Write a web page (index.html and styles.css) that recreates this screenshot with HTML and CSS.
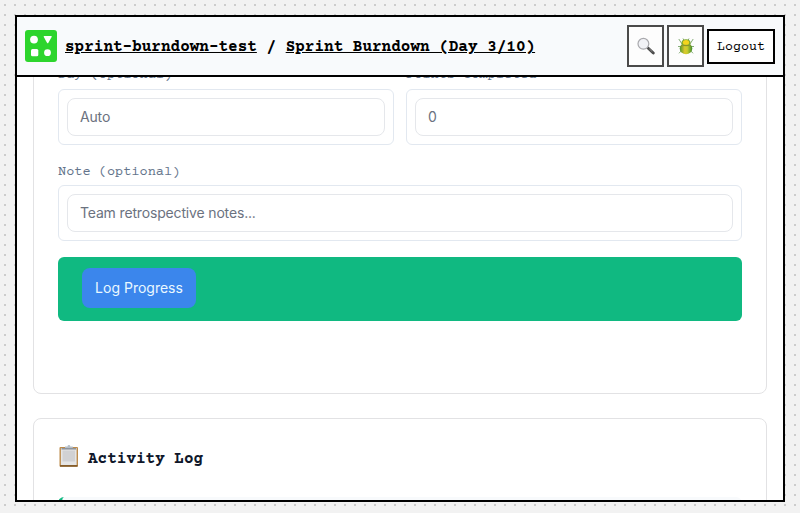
FILE: index.html
```html
<!DOCTYPE html>
<html lang="en">
<head>
<meta charset="utf-8">
<title>Sprint Burndown</title>
<link rel="stylesheet" href="styles.css">
</head>
<body>
<div class="window">
  <header class="bar">
    <svg class="logo" width="32" height="32" viewBox="0 0 32 32">
      <rect width="32" height="32" rx="3" fill="#2dd52d"/>
      <g fill="#fff">
        <circle cx="9" cy="9.600" r="3.900"/>
        <path d="M19.300 6h6.800q1 0 .5 1l-3.200 5.700q-.7 1-1.400 0l-3.200-5.700q-.5-1 .5-1z"/>
        <rect x="6" y="19" width="7.300" height="7.300" rx="1.500"/>
        <circle cx="22.500" cy="22.700" r="3.400"/>
      </g>
    </svg>
    <div class="crumbs"><a>sprint-burndown-test</a> / <a>Sprint Burndown (Day 3/10)</a></div>
    <div class="actions">
      <button class="tool" aria-label="Search">
        <svg width="18" height="18" viewBox="0 0 18 18">
          <path d="M11 11l5.300 5" stroke="#4b4b4b" stroke-width="2.800" stroke-linecap="round"/>
          <path d="M12.300 11.800l3 2.900" stroke="#898989" stroke-width="1"/>
          <circle cx="6.400" cy="6.800" r="5.400" fill="#f1f2f6" stroke="#a9a9ad" stroke-width="1.200"/>
        </svg>
      </button>
      <button class="tool" aria-label="Report bug">
        <svg width="18" height="18" viewBox="0 0 18 18">
          <defs><linearGradient id="shell"><stop stop-color="#4f962d"/><stop offset=".4" stop-color="#dcc82d"/><stop offset=".6" stop-color="#c8cc2c"/><stop offset="1" stop-color="#3f8c2e"/></linearGradient></defs>
          <path d="M5 7L1.800 2M13 7l3.200-5M4 9.500H1M14 9.500h3M5 13l-3 3.300M13 13l3 3.300M7 3.500L6 1.500M11 3.500l1-2" fill="none" stroke="#86ae78" stroke-width="1"/>
          <ellipse cx="9" cy="11.500" rx="6.300" ry="5.800" fill="url(#shell)"/>
          <ellipse cx="9" cy="5.800" rx="4.500" ry="3.500" fill="#7fa82c"/>
          <ellipse cx="9" cy="5.600" rx="3.200" ry="2.500" fill="#f4d41d"/>
          <path d="M4 9q5-1.500 10 0" fill="none" stroke="#91812b" stroke-width=".6"/>
        </svg>
      </button>
      <button class="logout">Logout</button>
    </div>
  </header>
  <main class="view">
    <section class="card form">
      <div class="row">
        <div class="field"><label>Day (optional)</label><div class="box"><input placeholder="Auto"></div></div>
        <div class="field"><label>Points Completed</label><div class="box"><input placeholder="0"></div></div>
      </div>
      <div class="field"><label>Note (optional)</label><div class="box"><input placeholder="Team retrospective notes..."></div></div>
      <div class="submit"><button class="primary">Log Progress</button></div>
    </section>
    <section class="card log">
      <h2>
        <svg class="clipboard" width="22" height="24" viewBox="0 0 22 24">
          <rect x="1.500" y="3" width="18.500" height="19.700" rx="1" fill="#bd8b4b"/>
          <path d="M2 21.900h17.500" stroke="#7b5528" stroke-width="1.500"/>
          <rect x="2.900" y="4" width="15.700" height="17" fill="#e5e5e5"/>
          <rect x="4.500" y="6.500" width="12.500" height="11" fill="#d1d1d3"/>
          <path d="M3.500 4.800h14.500" stroke="#858b94" stroke-width="1.400"/>
          <path d="M7 4V2.500h2.500a1.400 1.400 0 0 1 2.800 0h2.500V4z" fill="#b6c0ca"/>
        </svg>
        <span>Activity Log</span>
      </h2>
      <div class="entry"></div>
    </section>
  </main>
</div>
</body>
</html>
```
FILE: styles.css
```css
* { box-sizing: border-box; }
body {
  margin: 0;
  height: 100vh;
  padding: 15px 15px 11px;
  overflow: hidden;
  background: #f2f2f2 radial-gradient(circle, #ccc 1px, transparent 1px) 0 0 / 10px 10px;
  font-family: "Courier Prime", Courier, "Liberation Mono", monospace;
}
.window {
  height: 100%;
  display: flex;
  flex-direction: column;
  border: 2px solid #000;
  background: #fff;
}
.bar {
  flex: 0 0 60px;
  display: flex;
  align-items: center;
  padding: 0 8px;
  background: #f8fafc;
  border-bottom: 2px solid #000;
}
.logo { margin-right: 8px; }
.crumbs { flex: 1; padding-top: 2px; font-size: 16px; font-weight: 700; white-space: nowrap; }
.crumbs a { text-decoration: underline; }
.actions { display: flex; align-items: center; gap: 3px; }
button { font: inherit; padding: 0; }
.tool {
  width: 37px;
  height: 42px;
  display: grid;
  place-items: center;
  border: 2px solid #4a4a4a;
  background: #fdfdfd;
}
.logout {
  width: 68px;
  height: 35px;
  padding-top: 3px;
  border: 2px solid #000;
  background: #fff;
  color: #000;
  font-size: 13.333px;
}
.view { flex: 1; min-height: 0; overflow: hidden; padding: 0 16px; }
.card { border: 1px solid #e2e2e4; border-radius: 8px; padding: 24px; }
.form { height: 357px; margin: -40px 0 24px; }
.row { display: grid; grid-template-columns: 1fr 1fr; gap: 12px; }
.field { margin-bottom: 16px; }
label { display: block; height: 24px; line-height: 22px; color: #64748b; font-size: 13.6px; }
.row label { height: 27px; line-height: 26px; }
.box { height: 56px; padding: 8px; border: 1px solid #e2e8f0; border-radius: 6px; }
input {
  display: block;
  width: 100%;
  height: 38px;
  padding: 0 12px 2px;
  border: 1px solid #e5e7eb;
  border-radius: 8px;
  font: 14px Inter, sans-serif;
  letter-spacing: -.16px;
}
input::placeholder { color: #6b7280; opacity: 1; }
.submit { height: 64px; padding: 11px 24px; border-radius: 6px; background: #10b981; }
.primary {
  width: 114px;
  height: 40px;
  padding-bottom: 2px;
  border: 0;
  border-radius: 8px;
  background: #3b86ec;
  color: #e9f8ff;
  font: 400 14px Inter, sans-serif;
}
.log { height: 220px; }
h2 { display: flex; align-items: center; gap: 8px; height: 30px; margin: 0 0 24px; color: #0f172a; font-size: 16px; }
h2 span { padding-top: 2px; }
.clipboard { margin-top: -5px; }
.entry { height: 60px; border-left: 4px solid #10b981; border-radius: 6px; background: #f8fafc; }
```
